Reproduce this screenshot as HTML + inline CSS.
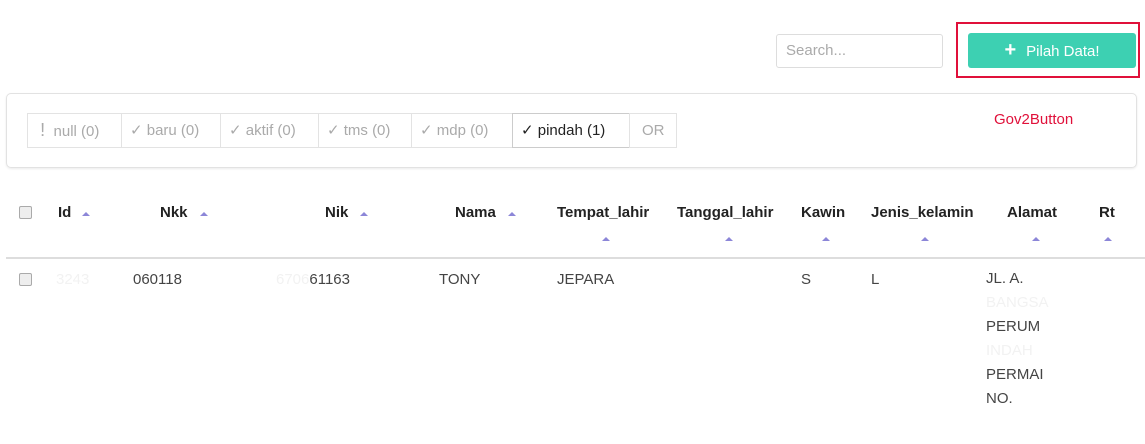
<!DOCTYPE html>
<html><head><style>
body{margin:0;width:1145px;height:444px;background:#fff;font-family:"Liberation Sans",sans-serif;position:relative;overflow:hidden;color:#333}
.a{position:absolute;white-space:nowrap}
.h{font-weight:bold;font-size:15px;color:#222;top:204px}
.ar{position:absolute;width:0;height:0;border-left:4px solid transparent;border-right:4px solid transparent;border-bottom:4px solid #8c86d8}
.c{font-size:15px;color:#444}
.f{color:#f2f2f2}
.btn{position:absolute;top:113px;height:35px;border:1px solid #e3e3e3;box-sizing:border-box;font-size:15px;color:#aaa;line-height:33px;padding-left:8px}
.cb{position:absolute;width:11px;height:11px;border:1px solid #aaa;border-radius:2px;background:#eee}
</style></head><body>
<div class="a" style="left:776px;top:34px;width:167px;height:34px;border:1px solid #ddd;border-radius:3px;box-sizing:border-box;font-size:15px;color:#aaa;line-height:32px;padding-left:9px">Search...</div>
<div class="a" style="left:956px;top:22px;width:184px;height:56px;border:2px solid #e0103a;box-sizing:border-box"></div>
<div class="a" style="left:968px;top:33px;width:168px;height:35px;background:#3dd0b2;border-radius:3px;color:#fff;font-size:15px;line-height:35px;text-align:center"><b style="font-size:20px;margin-right:10px">+</b>Pilah Data!</div>
<div class="a" style="left:6px;top:93px;width:1131px;height:75px;border:1px solid #e2e2e2;border-radius:5px;box-sizing:border-box;box-shadow:0 1px 2px rgba(0,0,0,.08)"></div>
<div class="a" style="left:994px;top:111px;color:#e0103a;font-size:15px">Gov2Button</div>
<div class="btn" style="left:27px;width:95px">&nbsp;<span style="font-size:18px">!</span>&nbsp;&nbsp;null (0)</div>
<div class="btn" style="left:121px;width:100px">✓ baru (0)</div>
<div class="btn" style="left:220px;width:99px">✓ aktif (0)</div>
<div class="btn" style="left:318px;width:94px">✓ tms (0)</div>
<div class="btn" style="left:411px;width:102px">✓ mdp (0)</div>
<div class="btn" style="left:512px;width:118px;color:#222;border-color:#ccc">✓ pindah (1)</div>
<div class="btn" style="left:629px;width:48px;padding-left:12px">OR</div>
<div class="cb" style="left:19px;top:206px"></div>
<div class="a h" style="left:58px">Id</div><div class="ar" style="left:82px;top:212px"></div>
<div class="a h" style="left:160px">Nkk</div><div class="ar" style="left:200px;top:212px"></div>
<div class="a h" style="left:325px">Nik</div><div class="ar" style="left:360px;top:212px"></div>
<div class="a h" style="left:455px">Nama</div><div class="ar" style="left:508px;top:212px"></div>
<div class="a h" style="left:557px">Tempat_lahir</div><div class="ar" style="left:602px;top:237px"></div>
<div class="a h" style="left:677px">Tanggal_lahir</div><div class="ar" style="left:725px;top:237px"></div>
<div class="a h" style="left:801px">Kawin</div><div class="ar" style="left:822px;top:237px"></div>
<div class="a h" style="left:871px">Jenis_kelamin</div><div class="ar" style="left:921px;top:237px"></div>
<div class="a h" style="left:1007px">Alamat</div><div class="ar" style="left:1032px;top:237px"></div>
<div class="a h" style="left:1099px">Rt</div><div class="ar" style="left:1104px;top:237px"></div>
<div class="a" style="left:6px;top:257px;width:1139px;height:2px;background:#ddd"></div>
<div class="cb" style="left:19px;top:273px"></div>
<div class="a c" style="left:56px;top:271px"><span class="f">3243</span></div>
<div class="a c" style="left:133px;top:271px">060118</div>
<div class="a c" style="left:276px;top:271px"><span class="f">6706</span>61163</div>
<div class="a c" style="left:439px;top:271px">TONY</div>
<div class="a c" style="left:557px;top:271px">JEPARA</div>
<div class="a c" style="left:801px;top:271px">S</div>
<div class="a c" style="left:871px;top:271px">L</div>
<div class="a c" style="left:986px;top:267px;line-height:24px">JL. A.<br><span class="f">BANGSA</span><br>PERUM<br><span class="f">INDAH</span><br>PERMAI<br>NO.</div>
</body></html>
